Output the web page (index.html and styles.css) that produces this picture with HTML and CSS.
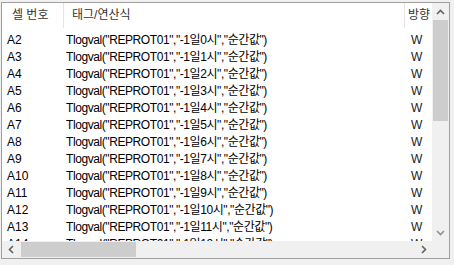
FILE: index.html
```html
<!DOCTYPE html>
<html lang="ko">
<head>
<meta charset="utf-8">
<link rel="stylesheet" href="styles.css">
</head>
<body>
<div class="list">
  <div class="view">
    <div class="header">
      <div class="hcell c1">셀 번호</div>
      <div class="hcell c2">태그/연산식</div>
      <div class="hcell c3">방향</div>
    </div>
    <div class="rows">
      <div class="row"><span class="c1">A2</span><span class="c2">Tlogval("REPROT01","-1일0시","순간값")</span><span class="c3">W</span></div>
      <div class="row"><span class="c1">A3</span><span class="c2">Tlogval("REPROT01","-1일1시","순간값")</span><span class="c3">W</span></div>
      <div class="row"><span class="c1">A4</span><span class="c2">Tlogval("REPROT01","-1일2시","순간값")</span><span class="c3">W</span></div>
      <div class="row"><span class="c1">A5</span><span class="c2">Tlogval("REPROT01","-1일3시","순간값")</span><span class="c3">W</span></div>
      <div class="row"><span class="c1">A6</span><span class="c2">Tlogval("REPROT01","-1일4시","순간값")</span><span class="c3">W</span></div>
      <div class="row"><span class="c1">A7</span><span class="c2">Tlogval("REPROT01","-1일5시","순간값")</span><span class="c3">W</span></div>
      <div class="row"><span class="c1">A8</span><span class="c2">Tlogval("REPROT01","-1일6시","순간값")</span><span class="c3">W</span></div>
      <div class="row"><span class="c1">A9</span><span class="c2">Tlogval("REPROT01","-1일7시","순간값")</span><span class="c3">W</span></div>
      <div class="row"><span class="c1">A10</span><span class="c2">Tlogval("REPROT01","-1일8시","순간값")</span><span class="c3">W</span></div>
      <div class="row"><span class="c1">A11</span><span class="c2">Tlogval("REPROT01","-1일9시","순간값")</span><span class="c3">W</span></div>
      <div class="row"><span class="c1">A12</span><span class="c2">Tlogval("REPROT01","-1일10시","순간값")</span><span class="c3">W</span></div>
      <div class="row"><span class="c1">A13</span><span class="c2">Tlogval("REPROT01","-1일11시","순간값")</span><span class="c3">W</span></div>
      <div class="row"><span class="c1">A14</span><span class="c2">Tlogval("REPROT01","-1일12시","순간값")</span><span class="c3">W</span></div>
    </div>
  </div>
  <div class="vbar">
    <div class="btn"><svg width="9" height="6" viewBox="0 0 9 6"><polyline points="1,5 4.5,1.5 8,5" fill="none" stroke="#606060" stroke-width="1.6"/></svg></div>
    <div class="vtrack"><div class="vthumb"></div></div>
    <div class="btn"><svg width="9" height="6" viewBox="0 0 9 6"><polyline points="1,1 4.5,4.5 8,1" fill="none" stroke="#909090" stroke-width="1.6"/></svg></div>
  </div>
  <div class="hbar">
    <div class="btn"><svg width="6" height="9" viewBox="0 0 6 9"><polyline points="5,1 1.5,4.5 5,8" fill="none" stroke="#606060" stroke-width="1.6"/></svg></div>
    <div class="htrack"><div class="hthumb"></div></div>
    <div class="btn"><svg width="6" height="9" viewBox="0 0 6 9"><polyline points="1,1 4.5,4.5 1,8" fill="none" stroke="#606060" stroke-width="1.6"/></svg></div>
  </div>
  <div class="corner"></div>
</div>
</body>
</html>
```
FILE: styles.css
```css
html, body {
  margin: 0;
  padding: 0;
  background: #f0f0f0;
}
body {
  padding: 2px 0 0 1px;
  font-family: "Liberation Sans", "Noto Sans CJK KR", sans-serif;
  font-size: 12px;
  color: #000;
}
.list {
  width: 447px;
  height: 255px;
  border: 1px solid #a0a0a0;
  background: #fff;
  display: grid;
  grid-template-columns: 430px 17px;
  grid-template-rows: 238px 17px;
  overflow: hidden;
}
.view {
  overflow: hidden;
}
.header {
  display: flex;
  height: 25px;
}
.hcell {
  line-height: 25px;
  color: #333;
  white-space: nowrap;
  flex: none;
}
.header .c1 {
  width: 51px;
  padding-left: 10px;
  border-right: 1px solid #e5e5e5;
}
.header .c2 {
  width: 332px;
  padding-left: 8px;
  border-right: 1px solid #e5e5e5;
}
.header .c3 {
  padding-left: 3px;
}
.rows {
  padding-top: 4px;
}
.row {
  display: flex;
  height: 17px;
  line-height: 17px;
  white-space: nowrap;
}
.row .c1 {
  width: 59px;
  padding-left: 5px;
  flex: none;
}
.row .c2 {
  width: 341px;
  flex: none;
  letter-spacing: -0.42px;
}
.row .c3 {
  padding-left: 4px;
  color: #222;
}
.vbar {
  display: flex;
  flex-direction: column;
  background: #f0f0f0;
}
.vbar .btn {
  height: 17px;
  display: flex;
  align-items: center;
  justify-content: center;
  flex: none;
}
.vtrack {
  flex: 1;
  padding: 0 1px;
}
.vthumb {
  height: 101px;
  background: #cdcdcd;
}
.hbar {
  display: flex;
  background: #f0f0f0;
}
.hbar .btn {
  width: 17px;
  display: flex;
  align-items: center;
  justify-content: center;
  flex: none;
}
.htrack {
  flex: 1;
  padding: 1px 0;
}
.hthumb {
  width: 115px;
  height: 100%;
  margin-left: 2px;
  background: #cdcdcd;
}
.corner {
  background: #f0f0f0;
}
```
